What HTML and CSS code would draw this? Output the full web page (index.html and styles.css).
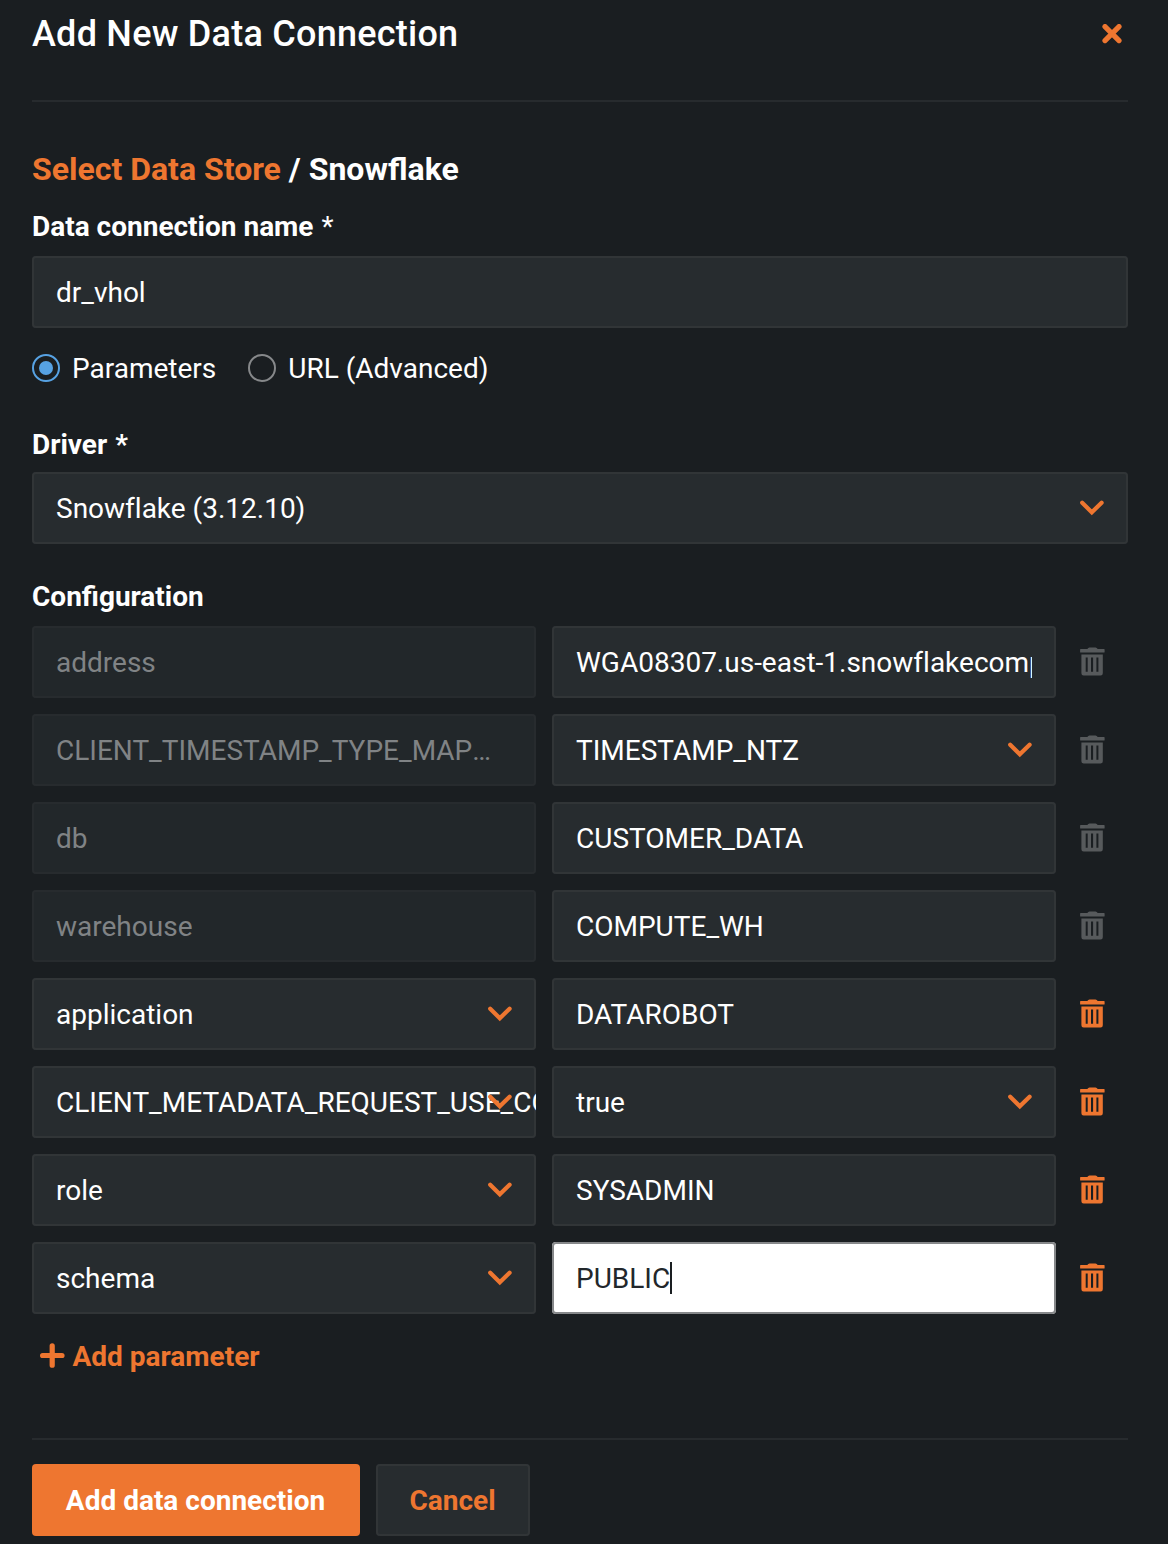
FILE: index.html
```html
<!DOCTYPE html>
<html lang="en">
<head>
<meta charset="utf-8">
<title>Add New Data Connection</title>
<link rel="stylesheet" href="styles.css">
</head>
<body>
<svg class="sprite" aria-hidden="true">
  <symbol id="chevron" viewBox="0 0 24 16"><path d="M2.2 2.7 11.8 12.3 21.6 2.7" fill="none" stroke="currentColor" stroke-width="4.2" stroke-linecap="round"/></symbol>
  <symbol id="trash" viewBox="0 0.4 25 30"><path fill="currentColor" fill-rule="evenodd" d="M1 2.3h6.3l1-1q.5-.5 1.200-.5h6q.7 0 1.200.5l1 1H24q.6 0 .6.600v2.500q0 .6-.6.600H.7q-.6 0-.6-.6V2.900q0-.6.6-.6zM1.400 7.800h21.400v18.800q0 2.200-2.200 2.200h-17q-2.200 0-2.200-2.200zM5.700 11v14.100h2V11zM11 11v14.100h2.100V11zM16.400 11v14.100h2V11z"/></symbol>
</svg>
<main class="dialog">
  <header class="header">
    <h1 class="title">Add New Data Connection</h1>
    <svg class="close" viewBox="0 0 20 20"><path d="M3 2.600 17 16.600M17 2.600 3 16.600" fill="none" stroke="currentColor" stroke-width="5.200" stroke-linecap="round"/></svg>
  </header>
  <h2 class="crumbs"><span class="link">Select Data Store</span> / Snowflake</h2>
  <div class="label name-label">Data connection name <span class="required">*</span></div>
  <div class="field"><span class="value">dr_vhol</span></div>
  <div class="radios">
    <div class="option"><span class="radio checked"></span>Parameters</div>
    <div class="option"><span class="radio"></span>URL (Advanced)</div>
  </div>
  <div class="label driver-label">Driver <span class="star">*</span></div>
  <div class="field select"><span class="value">Snowflake (3.12.10)</span><svg class="chevron"><use href="#chevron"/></svg></div>
  <div class="label config-label">Configuration</div>
  <section class="rows">
    <div class="row"><div class="field disabled"><span class="value">address</span></div><div class="field"><span class="value">WGA08307.us-east-1.snowflakecomputing.com</span></div><svg class="trash muted"><use href="#trash"/></svg></div>
    <div class="row"><div class="field disabled"><span class="value ellipsis">CLIENT_TIMESTAMP_TYPE_MAPPING</span></div><div class="field select"><span class="value">TIMESTAMP_NTZ</span><svg class="chevron"><use href="#chevron"/></svg></div><svg class="trash muted"><use href="#trash"/></svg></div>
    <div class="row"><div class="field disabled"><span class="value">db</span></div><div class="field"><span class="value">CUSTOMER_DATA</span></div><svg class="trash muted"><use href="#trash"/></svg></div>
    <div class="row"><div class="field disabled"><span class="value">warehouse</span></div><div class="field"><span class="value">COMPUTE_WH</span></div><svg class="trash muted"><use href="#trash"/></svg></div>
    <div class="row"><div class="field select"><span class="value">application</span><svg class="chevron"><use href="#chevron"/></svg></div><div class="field"><span class="value">DATAROBOT</span></div><svg class="trash"><use href="#trash"/></svg></div>
    <div class="row"><div class="field select"><span class="value">CLIENT_METADATA_REQUEST_USE_CO</span><svg class="chevron"><use href="#chevron"/></svg></div><div class="field select"><span class="value">true</span><svg class="chevron"><use href="#chevron"/></svg></div><svg class="trash"><use href="#trash"/></svg></div>
    <div class="row"><div class="field select"><span class="value">role</span><svg class="chevron"><use href="#chevron"/></svg></div><div class="field"><span class="value">SYSADMIN</span></div><svg class="trash"><use href="#trash"/></svg></div>
    <div class="row"><div class="field select"><span class="value">schema</span><svg class="chevron"><use href="#chevron"/></svg></div><div class="field focused"><span class="value">PUBLIC</span><span class="caret"></span></div><svg class="trash"><use href="#trash"/></svg></div>
  </section>
  <div class="add"><svg class="plus" viewBox="0 0 25 25"><path d="M12.200 2.800V22.200M2.600 12.500H22" fill="none" stroke="currentColor" stroke-width="5.200" stroke-linecap="round"/></svg>Add parameter</div>
  <footer class="footer">
    <div class="button primary">Add data connection</div>
    <div class="button secondary">Cancel</div>
  </footer>
</main>
</body>
</html>
```
FILE: styles.css
```css
* { box-sizing: border-box; }
body {
  margin: 0;
  background: #1a1e21;
  color: #fff;
  font: 400 28px/40px Roboto, sans-serif;
}
.sprite { display: none; }
.dialog {
  height: 1544px;
  padding: 0 40px 0 32px;
  display: flex;
  flex-direction: column;
  overflow: hidden;
}
.header {
  height: 102px;
  padding-right: 6px;
  border-bottom: 2px solid #272b2e;
  display: flex;
  justify-content: space-between;
  align-items: flex-start;
}
.title { margin: 10px 0 0; font-size: 36px; font-weight: 500; line-height: 48px; letter-spacing: .24px; }
.close { width: 20px; height: 20px; margin-top: 24px; color: #ee7630; }
.crumbs { margin: 47px 0 0; font-size: 32px; font-weight: 700; line-height: 40px; }
.link, .add { color: #ee7630; }
.label { font-weight: 700; height: 40px; }
.name-label { margin: 18px 0 9px; }
.required { font-weight: 400; }
.required, .star { margin-left: 1px; }
.driver-label { margin: 36px 0 7px; }
.config-label { margin: 33px 0 9px; }
.field {
  position: relative;
  height: 72px;
  flex-shrink: 0;
  min-width: 0;
  padding: 2px 24px 0;
  display: flex;
  align-items: center;
  border-radius: 4px;
  background: #272c2f;
  box-shadow: inset 0 0 0 2px #313537;
  overflow: hidden;
}
.value { white-space: nowrap; overflow: hidden; min-width: 0; font-variant-ligatures: none; }
.select .value { overflow: visible; }
.value.ellipsis { text-overflow: ellipsis; margin-right: 16px; }
.disabled { background: #22272a; color: #808385; box-shadow: inset 0 0 0 2px #272b2e; }
.focused { background: #fff; color: #22272b; box-shadow: inset 0 0 0 2px #86888a; }
.caret { width: 2px; height: 32px; margin-top: -2px; background: #1a1e21; }
.chevron { position: absolute; right: 24px; top: 28px; width: 24px; height: 16px; color: #ee7630; }
.radios { display: flex; gap: 32px; margin-top: 21px; height: 40px; }
.option { display: flex; align-items: center; gap: 12px; }
.radio {
  width: 28px;
  height: 28px;
  margin-top: -2px;
  border: 2px solid #86888a;
  border-radius: 50%;
  display: grid;
  place-items: center;
}
.checked { border-color: #57a2e3; }
.checked::after { content: ""; width: 14px; height: 14px; border-radius: 50%; background: #57a2e3; }
.rows { display: grid; gap: 16px; }
.row { display: grid; grid-template-columns: 504px 504px 33px; column-gap: 16px; align-items: center; }
.trash { width: 25px; height: 30px; margin: 0 0 0 8px; color: #ee7630; }
.muted { color: #575a5c; }
.add { display: flex; align-items: center; gap: 7.5px; height: 40px; margin: 23px 0 0 8px; font-weight: 700; }
.plus { width: 25px; height: 25px; margin-top: -3px; }
.footer { margin-top: 61px; padding-top: 24px; border-top: 2px solid #272b2e; display: flex; gap: 16px; }
.button {
  height: 72px;
  padding-top: 2px;
  display: flex;
  justify-content: center;
  align-items: center;
  border-radius: 4px;
  font-weight: 700;
}
.primary { width: 328px; padding-right: 1px; background: #ee7630; }
.secondary { width: 154px; padding-right: 1px; background: #272c2f; color: #ee7630; box-shadow: inset 0 0 0 2px #313537; }
```
